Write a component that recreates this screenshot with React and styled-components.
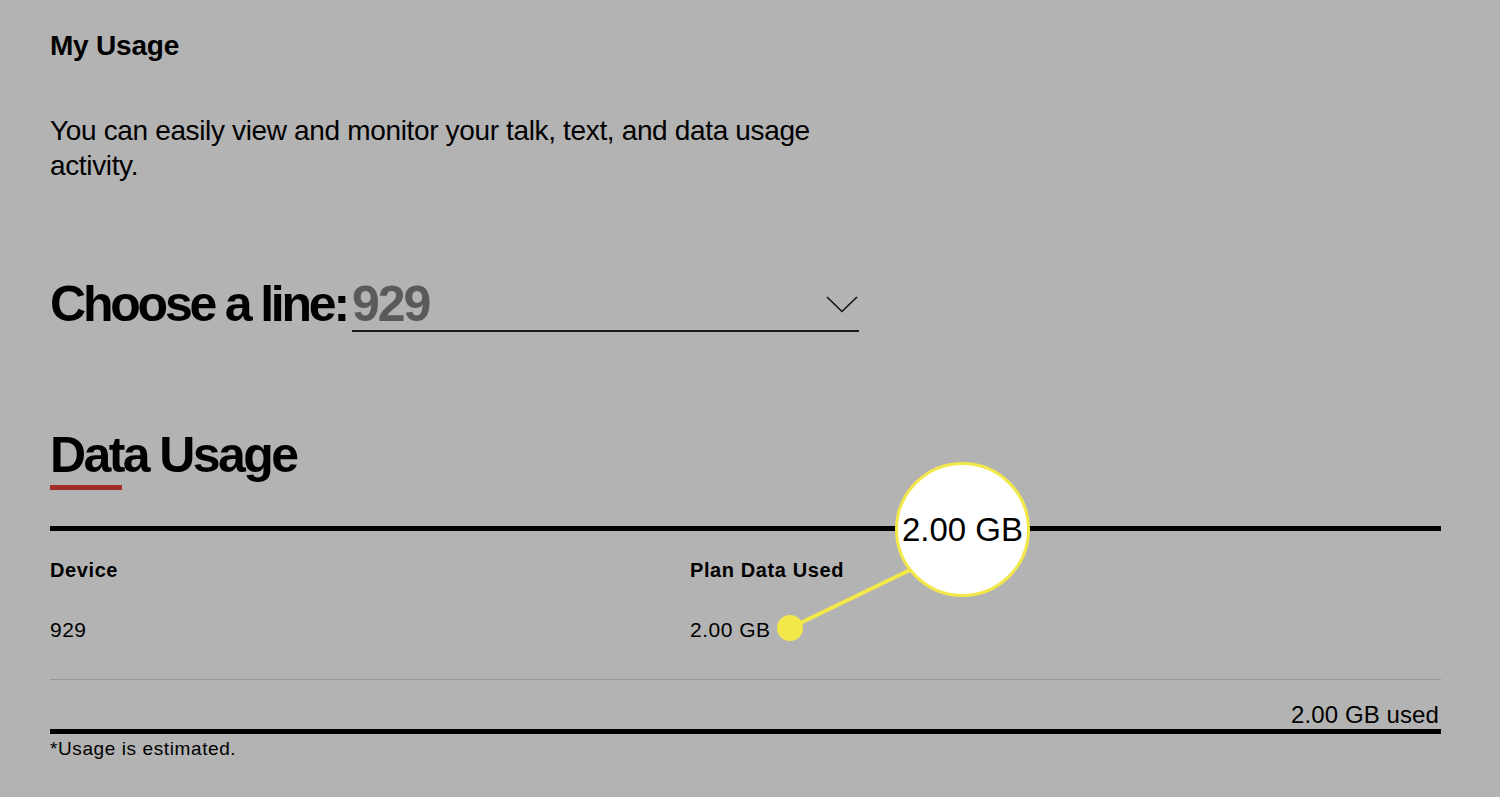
import React from 'react';
import styled, { createGlobalStyle } from 'styled-components';

const GlobalStyle = createGlobalStyle`
    html, body {
        margin: 0;
        padding: 0;
        background-color: #b3b3b3;
    }
    body {
        font-family: "Liberation Sans", Arial, Helvetica, sans-serif;
        color: #000;
    }
`;

const Page = styled.div`
    padding: 0 59px 0 50px;
    min-height: 797px;
    box-sizing: border-box;
`;

const Title = styled.h1`
    margin: 29px 0 0;
    font-size: 28px;
    line-height: 34px;
    font-weight: 700;
    letter-spacing: -0.2px;
`;

const Intro = styled.p`
    margin: 50px 0 0;
    width: 800px;
    font-size: 28px;
    line-height: 35px;
    letter-spacing: -0.35px;
`;

const ChooserRow = styled.div`
    display: flex;
    align-items: baseline;
    margin-top: 93px;
    gap: 5px;
`;

const ChooserLabel = styled.span`
    font-size: 50px;
    line-height: 56px;
    font-weight: 700;
    letter-spacing: -3.2px;
`;

const Select = styled.div`
    width: 507px;
    display: flex;
    align-items: baseline;
    justify-content: space-between;
    border-bottom: 2px solid #1a1a1a;
`;

const SelectValue = styled.span`
    font-size: 50px;
    line-height: 52px;
    font-weight: 700;
    letter-spacing: -2px;
    color: #5a5a5a;
`;

const Chevron = styled.svg`
    width: 32px;
    height: 17px;
    margin-right: 1px;
    align-self: flex-start;
    margin-top: 18px;
`;

const SectionTitle = styled.h2`
    margin: 95px 0 0;
    font-size: 50px;
    line-height: 56px;
    font-weight: 700;
    letter-spacing: -2.6px;
`;

const Accent = styled.div`
    width: 72px;
    height: 5px;
    margin-top: 2px;
    background-color: #9f2f28;
`;

const Table = styled.div`
    position: relative;
    margin-top: 36px;
`;

const Rule = styled.div`
    height: ${(p) => (p.$thin ? '1px' : '5px')};
    background-color: ${(p) => (p.$thin ? '#989898' : '#000')};
    margin-top: ${(p) => p.$top || 0}px;
`;

const Row = styled.div`
    display: grid;
    grid-template-columns: 640px 1fr;
    margin-top: ${(p) => p.$top}px;
    font-size: ${(p) => (p.$head ? '20px' : '21px')};
    line-height: 24px;
    font-weight: ${(p) => (p.$head ? 700 : 400)};
    letter-spacing: ${(p) => (p.$head ? '0.6px' : '0.5px')};
`;

const Total = styled.div`
    margin-top: 22px;
    text-align: right;
    font-size: 24px;
    line-height: 26px;
    letter-spacing: 0.1px;
    padding-right: 2px;
`;

const Footnote = styled.div`
    margin-top: 4px;
    font-size: 19px;
    line-height: 22px;
    letter-spacing: 0.6px;
`;

const Leader = styled.svg`
    position: absolute;
    left: 720px;
    top: 30px;
    width: 160px;
    height: 100px;
    overflow: visible;
`;

const Bubble = styled.div`
    position: absolute;
    left: 845px;
    top: -64px;
    width: 135px;
    height: 135px;
    box-sizing: border-box;
    border-radius: 50%;
    border: 3px solid #f3e84a;
    background-color: #fff;
    display: flex;
    align-items: center;
    justify-content: center;
    font-size: 33px;
    letter-spacing: 0;
    color: #000;
`;

const App = () => {
    return (
        <>
            <GlobalStyle />
            <Page>
                <Title>My Usage</Title>
                <Intro>You can easily view and monitor your talk, text, and data usage activity.</Intro>
                <ChooserRow>
                    <ChooserLabel>Choose a line:</ChooserLabel>
                    <Select>
                        <SelectValue>929</SelectValue>
                        <Chevron viewBox="0 0 32 17">
                            <polyline points="1,1 16,15.5 31,1" fill="none" stroke="#111" strokeWidth="1.6" />
                        </Chevron>
                    </Select>
                </ChooserRow>
                <SectionTitle>Data Usage</SectionTitle>
                <Accent />
                <Table>
                    <Rule />
                    <Row $head $top={27}>
                        <div>Device</div>
                        <div>Plan Data Used</div>
                    </Row>
                    <Row $top={36}>
                        <div>929</div>
                        <div>2.00 GB</div>
                    </Row>
                    <Rule $thin $top={37} />
                    <Total>2.00 GB used</Total>
                    <Rule $top={1} />
                    <Footnote>*Usage is estimated.</Footnote>
                    <Leader viewBox="0 0 160 100">
                        <line x1="20" y1="72" x2="140" y2="14" stroke="#f3e84a" strokeWidth="4" />
                        <circle cx="20" cy="72" r="13" fill="#f3e84a" />
                    </Leader>
                    <Bubble>2.00 GB</Bubble>
                </Table>
            </Page>
        </>
    );
};

export default App;
